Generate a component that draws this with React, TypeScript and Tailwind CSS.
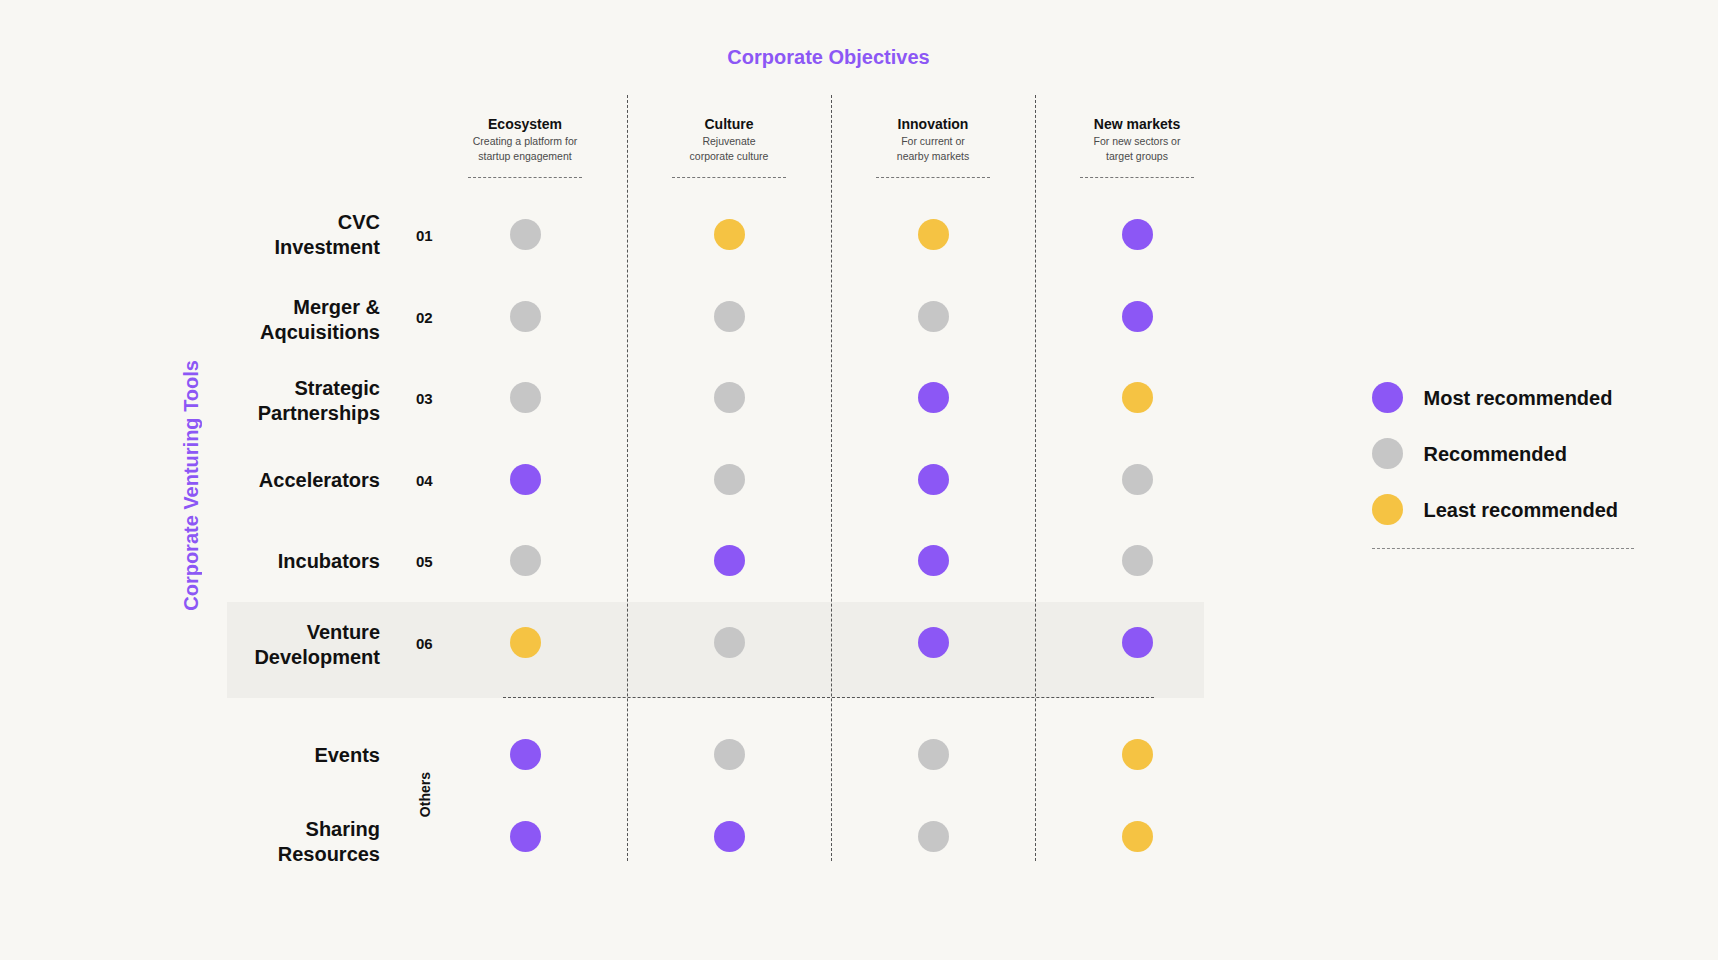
import React from 'react';

type C = 'p' | 'g' | 'y';

const DOT: Record<C, string> = {
  p: 'bg-[#8c57f5]',
  g: 'bg-[#c6c6c6]',
  y: 'bg-[#f5c343]',
};

const COLS = ['col-start-4', 'col-start-5', 'col-start-6', 'col-start-7 col-span-2'];

const HEADERS = [
  { t: 'Ecosystem', s: ['Creating a platform for', 'startup engagement'] },
  { t: 'Culture', s: ['Rejuvenate', 'corporate culture'] },
  { t: 'Innovation', s: ['For current or', 'nearby markets'] },
  { t: 'New markets', s: ['For new sectors or', 'target groups'] },
];

type Row = { label: string[]; num?: string; dots: C[]; row: string; top?: boolean; nudge: string };

const ROWS: Row[] = [
  { label: ['CVC', 'Investment'], num: '01', dots: ['g', 'y', 'y', 'p'], row: 'row-start-3', nudge: 'mt-[1px]' },
  { label: ['Merger &', 'Aqcuisitions'], num: '02', dots: ['g', 'g', 'g', 'p'], row: 'row-start-4', nudge: 'mt-[8px]' },
  { label: ['Strategic', 'Partnerships'], num: '03', dots: ['g', 'g', 'p', 'y'], row: 'row-start-5', nudge: 'mt-[6px]' },
  { label: ['Accelerators'], num: '04', dots: ['p', 'g', 'p', 'g'], row: 'row-start-6', nudge: 'mt-[2px]' },
  { label: ['Incubators'], num: '05', dots: ['g', 'p', 'p', 'g'], row: 'row-start-7', nudge: 'mt-[2px]' },
  { label: ['Venture', 'Development'], num: '06', dots: ['y', 'g', 'p', 'p'], row: 'row-start-8', nudge: 'mt-[6px]' },
  { label: ['Events'], dots: ['p', 'g', 'g', 'y'], row: 'row-start-11', nudge: 'mt-[2px]' },
  { label: ['Sharing', 'Resources'], dots: ['p', 'p', 'g', 'y'], row: 'row-start-12', top: true, nudge: 'mt-[22px]' },
];

function Dot({ c }: { c: C }) {
  return <div className={`w-[31px] h-[31px] rounded-full ${DOT[c]}`} />;
}

export default function App() {
  return (
    <div
      className="w-full h-[960px] overflow-hidden bg-[#f8f7f3] text-[#111] pt-[45px] pl-[180px] flex items-start"
      style={{ fontFamily: '"Liberation Sans", Arial, sans-serif' }}
    >
      <div className="grid grid-cols-[47px_153px_43px_204px_204px_204px_169px_35px] grid-rows-[50px_99px_81.5px_81.5px_81.5px_81.5px_81.5px_81.5px_15px_15.5px_81.5px_66px]">
        {/* highlight band */}
        <div className="col-start-2 col-end-8 row-start-8 row-end-10 bg-[#efeeea]" />
        {/* horizontal dashed line under highlight */}
        <div className="col-start-4 col-end-9 row-start-9 self-end ml-[80px] mr-[85px] border-b border-dashed border-[#555]" />
        {/* vertical dashed lines */}
        <div className="col-start-5 row-start-2 row-end-13 border-l border-dashed border-[#555]" />
        <div className="col-start-6 row-start-2 row-end-13 border-l border-dashed border-[#555]" />
        <div className="col-start-7 row-start-2 row-end-13 border-l border-dashed border-[#555]" />

        {/* title */}
        <div className="col-start-4 col-end-9 row-start-1 self-start text-center text-[20px] leading-[24px] font-bold text-[#8c57f5] pr-[5px]">
          Corporate Objectives
        </div>

        {/* vertical label */}
        <div className="col-start-1 row-start-2 row-end-13 self-center justify-self-start mt-[14px] [writing-mode:vertical-rl] rotate-180 text-[20px] leading-[23px] font-bold text-[#8c57f5] whitespace-nowrap">
          Corporate Venturing Tools
        </div>

        {/* headers */}
        {HEADERS.map((h, i) => (
          <div key={h.t} className={`${COLS[i]} row-start-2 flex flex-col items-center pt-[20.5px]`}>
            <div className="text-[14px] leading-[17px] font-bold">{h.t}</div>
            <div className="mt-[1px] text-[10.5px] leading-[15.3px] text-[#4a4a4a] text-center">
              {h.s.map((s) => (
                <div key={s}>{s}</div>
              ))}
            </div>
            <div className="mt-[13px] w-[114px] border-t border-dashed border-[#777]" />
          </div>
        ))}

        {/* rows */}
        {ROWS.map((r) => (
          <React.Fragment key={r.label.join(' ')}>
            <div
              className={`col-start-2 ${r.row} ${r.top ? 'self-start' : 'self-center'} ${r.nudge} text-right text-[20px] leading-[25px] font-bold whitespace-nowrap`}
            >
              {r.label.map((l) => (
                <div key={l}>{l}</div>
              ))}
            </div>
            {r.num && (
              <div className={`col-start-3 ${r.row} self-center mt-[2px] pl-[36px] text-[15px] leading-[17px] font-bold whitespace-nowrap`}>
                {r.num}
              </div>
            )}
            {r.dots.map((d, i) => (
              <div
                key={i}
                className={`${COLS[i]} ${r.row} flex justify-center ${r.top ? 'items-start pt-[25.5px]' : 'items-center'}`}
              >
                <Dot c={d} />
              </div>
            ))}
          </React.Fragment>
        ))}

        {/* Others */}
        <div className="col-start-3 row-start-11 row-end-13 self-center justify-self-start ml-[37px] mt-[14px] [writing-mode:vertical-rl] rotate-180 text-[14px] leading-[17px] font-bold whitespace-nowrap">
          Others
        </div>
      </div>

      {/* legend */}
      <div className="ml-[133px] mt-[337px] flex flex-col">
        <div className="flex flex-col gap-[25px]">
          {([
            ['p', 'Most recommended'],
            ['g', 'Recommended'],
            ['y', 'Least recommended'],
          ] as [C, string][]).map(([c, t]) => (
            <div key={t} className="flex items-center gap-[20.5px] h-[31px]">
              <Dot c={c} />
              <span className="text-[20px] leading-[24px] font-bold whitespace-nowrap">{t}</span>
            </div>
          ))}
        </div>
        <div className="mt-[23px] w-[262px] border-t border-dashed border-[#888]" />
      </div>
    </div>
  );
}
